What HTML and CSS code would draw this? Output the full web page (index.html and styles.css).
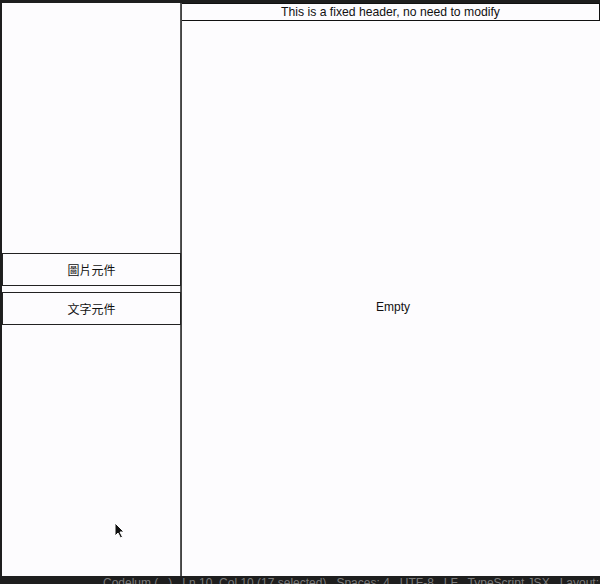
FILE: index.html
```html
<!DOCTYPE html>
<html>
<head>
<meta charset="utf-8">
<link rel="stylesheet" href="styles.css">
</head>
<body>
<div class="frame">
  <div class="app">
    <aside class="sidebar">
      <div class="item">圖片元件</div>
      <div class="item">文字元件</div>
    </aside>
    <main class="main">
      <header class="header">This is a fixed header, no need to modify</header>
      <div class="content">Empty</div>
    </main>
  </div>
  <div class="status"><span>Codelum (...)   Ln 10, Col 10 (17 selected)   Spaces: 4   UTF-8   LF   TypeScript JSX   Layout: U.S.   ✓ Prettier   ⚠</span></div>
  <svg class="cursor" width="12" height="18" viewBox="0 0 12 18"><path d="M1 1 L1 14 L4 11 L6.5 16 L8.5 15 L6 10 L10 10 Z" fill="#111" stroke="#fff" stroke-width="1"/></svg>
</div>
</body>
</html>
```
FILE: styles.css
```css
html, body {
  margin: 0;
  padding: 0;
  background: #1e1e1e;
  width: 600px;
  height: 584px;
  overflow: hidden;
}
.frame {
  position: relative;
  width: 600px;
  height: 584px;
  display: flex;
  flex-direction: column;
  padding: 3px 0 0 2px;
  box-sizing: border-box;
}
.app {
  display: flex;
  height: 573px;
  background: #fdfcfe;
  font-family: "Liberation Sans", "Noto Sans CJK TC", sans-serif;
  color: #111;
}
.sidebar {
  width: 178px;
  border-right: 1px solid #555;
  display: flex;
  flex-direction: column;
  justify-content: center;
  gap: 6px;
  padding-bottom: 1px;
  box-sizing: content-box;
}
.item {
  height: 31px;
  border: 1px solid #222;
  margin-right: -1px;
  display: flex;
  align-items: center;
  justify-content: center;
  font-size: 12px;
  font-family: "Noto Sans CJK TC", sans-serif;
  background: #fdfcfe;
}
.main {
  flex: 1;
  display: flex;
  flex-direction: column;
  border-left: 1px solid #444;
}
.header {
  height: 16px;
  border: 1px solid #111;
  border-left: none;
  font-size: 12.2px;
  line-height: 16px;
  text-align: center;
}
.content {
  flex: 1;
  display: flex;
  align-items: center;
  justify-content: center;
  font-size: 12px;
  padding-top: 17px;
  padding-left: 4px;
}
.status {
  height: 8px;
  overflow: hidden;
  position: relative;
}
.status span {
  position: absolute;
  left: 101px;
  top: 0;
  font-family: "Liberation Sans", sans-serif;
  font-size: 12px;
  line-height: 14px;
  color: #7a7a7a;
  white-space: pre;
}
.cursor {
  position: absolute;
  left: 114px;
  top: 522px;
}
```
